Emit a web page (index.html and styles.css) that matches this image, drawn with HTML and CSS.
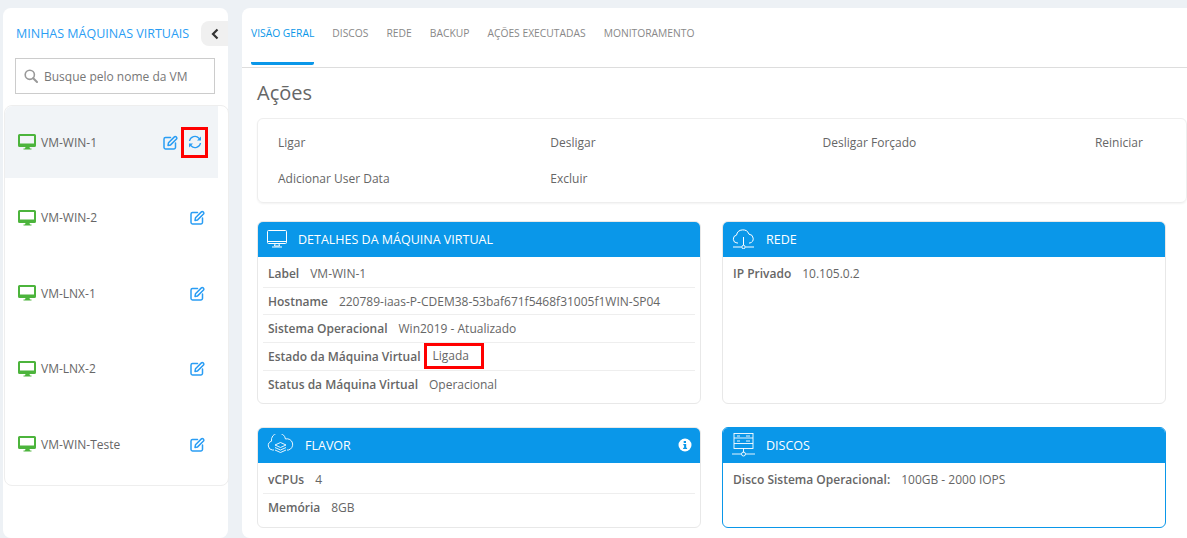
FILE: index.html
```html
<!DOCTYPE html>
<html lang="pt-BR">
<head>
  <meta charset="UTF-8" />
  <meta name="viewport" content="width=device-width, initial-scale=1.0" />
  <title>Minhas Máquinas Virtuais</title>
  <link rel="stylesheet" href="styles.css">
</head>
<body>

  <svg class="defs" width="0" height="0">
    <symbol id="vm" viewBox="0 0 18 16">
      <path d="M1.5 0h15A1.5 1.5 0 0 1 18 1.500v10a1.500 1.500 0 0 1-1.500 1.500h-5l.5 1.500h1.500v1h-8v-1H7l.5-1.500h-6A1.500 1.500 0 0 1 0 11.500v-10A1.500 1.500 0 0 1 1.500 0zM2 2v7.500h14V2z" fill="#4cb43c" fill-rule="evenodd"/>
    </symbol>
    <symbol id="edit" viewBox="0 0 15 15">
      <path d="M7.500 2.500H2.500A1.600 1.600 0 0 0 1 4v8.500A1.600 1.600 0 0 0 2.500 14H11a1.600 1.600 0 0 0 1.500-1.500V8" fill="none" stroke="#2a9df4" stroke-width="1.500" stroke-linecap="round"/>
      <path d="M5.500 7.800 11.400 1.900a1.200 1.200 0 0 1 1.700 0l.4.400a1.200 1.200 0 0 1 0 1.700L7.600 9.900 5 10.400z" fill="none" stroke="#2a9df4" stroke-width="1.500" stroke-linejoin="round"/>
    </symbol>
    <symbol id="sync" viewBox="0 0 14 14">
      <path d="M1.500 6A5.500 5.500 0 0 1 11 3.200L12.500 4.800M12.500 8A5.500 5.500 0 0 1 3 10.800L1.500 9.200" fill="none" stroke="#2a9df4" stroke-width="1.300"/>
      <path d="M13 1.500v4H9zM1 12.500v-4h4z" fill="#2a9df4"/>
    </symbol>
  </svg>

  <aside class="sidebar">
    <div class="sidebar-head">
      <span class="sidebar-title">MINHAS MÁQUINAS VIRTUAIS</span>
      <button class="collapse" type="button">
        <svg width="8" height="12" viewBox="0 0 8 12"><path d="M6.500 1.500 2 6l4.500 4.500" fill="none" stroke="#333" stroke-width="2.200"/></svg>
      </button>
    </div>
    <div class="search">
      <svg width="14" height="14" viewBox="0 0 14 14"><circle cx="5.800" cy="5.800" r="4.600" fill="none" stroke="#999" stroke-width="1.600"/><path d="M9.200 9.200 13 13" stroke="#999" stroke-width="2" stroke-linecap="round"/></svg>
      <span>Busque pelo nome da VM</span>
    </div>
    <ul class="vm-list">
      <li class="vm active">
        <svg class="vm-icon"><use href="#vm"/></svg>
        <span class="vm-name">VM-WIN-1</span>
        <svg class="edit-icon"><use href="#edit"/></svg>
        <span class="mark-icon"><svg class="sync-icon"><use href="#sync"/></svg></span>
      </li>
      <li class="vm">
        <svg class="vm-icon"><use href="#vm"/></svg>
        <span class="vm-name">VM-WIN-2</span>
        <svg class="edit-icon"><use href="#edit"/></svg>
      </li>
      <li class="vm">
        <svg class="vm-icon"><use href="#vm"/></svg>
        <span class="vm-name">VM-LNX-1</span>
        <svg class="edit-icon"><use href="#edit"/></svg>
      </li>
      <li class="vm">
        <svg class="vm-icon"><use href="#vm"/></svg>
        <span class="vm-name">VM-LNX-2</span>
        <svg class="edit-icon"><use href="#edit"/></svg>
      </li>
      <li class="vm">
        <svg class="vm-icon"><use href="#vm"/></svg>
        <span class="vm-name">VM-WIN-Teste</span>
        <svg class="edit-icon"><use href="#edit"/></svg>
      </li>
    </ul>
  </aside>

  <main class="main">
    <nav class="tabs">
      <a class="tab current">VISÃO GERAL</a>
      <a class="tab">DISCOS</a>
      <a class="tab">REDE</a>
      <a class="tab">BACKUP</a>
      <a class="tab">AÇÕES EXECUTADAS</a>
      <a class="tab">MONITORAMENTO</a>
    </nav>

    <div class="content">
      <h2 class="page-title">Ações</h2>

      <div class="actions">
        <span>Ligar</span>
        <span>Desligar</span>
        <span>Desligar Forçado</span>
        <span>Reiniciar</span>
        <span>Adicionar User Data</span>
        <span>Excluir</span>
      </div>

      <div class="cards">
        <section class="card card-details">
          <header class="card-head">
            <svg class="head-icon" width="20" height="18" viewBox="0 0 20 18" fill="none" stroke="#fff" stroke-width="1">
              <rect x=".5" y=".5" width="19" height="13" rx="1"/>
              <path d="M.5 11.500h19M8 14l-.5 2h5l-.5-2M5 17h10"/>
            </svg>
            <span>DETALHES DA MÁQUINA VIRTUAL</span>
          </header>
          <div class="row"><b>Label</b><span>VM-WIN-1</span></div>
          <div class="row"><b>Hostname</b><span>220789-iaas-P-CDEM38-53baf671f5468f31005f1WIN-SP04</span></div>
          <div class="row"><b>Sistema Operacional</b><span>Win2019 - Atualizado</span></div>
          <div class="row"><b>Estado da Máquina Virtual</b><span class="mark-text">Ligada</span></div>
          <div class="row"><b>Status da Máquina Virtual</b><span>Operacional</span></div>
        </section>

        <section class="card card-net">
          <header class="card-head">
            <svg class="head-icon" width="23" height="20" viewBox="0 0 23 20" fill="none" stroke="#fff" stroke-width="1">
              <path d="M6 14H5A4 4 0 0 1 4.500 6.100 6.500 6.500 0 0 1 17 5.200 4.500 4.500 0 0 1 18 14h-1"/>
              <path d="M11.500 8v8M1 18h8.500M13.500 18H22"/>
              <circle cx="11.500" cy="18" r="1.700"/>
            </svg>
            <span>REDE</span>
          </header>
          <div class="row"><b>IP Privado</b><span>10.105.0.2</span></div>
        </section>

        <section class="card card-flavor">
          <header class="card-head">
            <svg class="head-icon" width="27" height="22" viewBox="0 0 27 22" fill="none" stroke="#fff" stroke-width=".9">
              <path d="M7 16H5.500A4.500 4.500 0 0 1 4.500 7.200 7 7 0 0 1 18.500 5 5.500 5.500 0 0 1 21.500 16H20"/>
              <path d="M13.500 8.500 19 11l-5.500 2.500L8 11zM8 13.500 13.500 16l5.500-2.500M8 16l5.500 2.500L19 16"/>
            </svg>
            <span>FLAVOR</span>
            <svg class="info" width="14" height="14" viewBox="0 0 14 14">
              <circle cx="7" cy="7" r="6.500" fill="#fff"/>
              <path d="M5.700 3h2.300v2H5.700zM5.300 6h2.900v3.800h.9V11H5.100V9.800h1V7.200h-.8z" fill="#0a97e9"/>
            </svg>
          </header>
          <div class="row"><b>vCPUs</b><span>4</span></div>
          <div class="row"><b>Memória</b><span>8GB</span></div>
        </section>

        <section class="card card-disks">
          <header class="card-head">
            <svg class="head-icon" width="23" height="24" viewBox="0 0 23 24" fill="none" stroke="#fff" stroke-width=".9">
              <rect x="2" y=".5" width="19" height="15"/>
              <path d="M2 5h19M2 10.500h19M5 3h3M14 3h4M5 8h3M14 8h4M11.500 15.500v4M0 21h9.500M13.500 21H23"/>
              <circle cx="11.500" cy="21" r="2"/>
            </svg>
            <span>DISCOS</span>
          </header>
          <div class="row"><b>Disco Sistema Operacional:</b><span>100GB - 2000 IOPS</span></div>
        </section>
      </div>
    </div>
  </main>

</body>
</html>
```

FILE: styles.css
```css
html, body {
  height: 538px;
  overflow: hidden;
}

body {
  font-family: 'Open Sans', sans-serif;
  font-size: 12px;
  color: #666;
  background-color: #edf1f5;
  margin: 0;
  padding: 8px 0 0 3px;
  box-sizing: border-box;
  display: flex;
  gap: 14px;
}

.defs {
  position: absolute;
}

/* sidebar */
.sidebar {
  width: 225px;
  height: 530px;
  flex-shrink: 0;
  background-color: #fff;
  border-radius: 8px;
}

.sidebar-head {
  display: flex;
  align-items: center;
  justify-content: space-between;
  padding: 13px 0 0 13px;
  height: 25px;
}

.sidebar-title {
  font-size: 12.500px;
  color: #2a9df4;
}

.collapse {
  width: 27px;
  height: 25px;
  border: 0;
  padding: 0;
  background-color: #f0f0f0;
  border-radius: 8px 0 0 8px;
  display: flex;
  align-items: center;
  justify-content: center;
}

.search {
  margin: 12px 13px 0 12px;
  height: 34px;
  border: 1px solid #ccc;
  display: flex;
  align-items: center;
  gap: 6px;
  padding-left: 8px;
  color: #777;
}

.vm-list {
  list-style: none;
  margin: 11px 0 0 1px;
  padding: 0 10px 5px 0;
  width: 213px;
  height: 374px;
  border: 1px solid #eee;
  border-top-color: #eee;
  border-radius: 8px;
  box-sizing: content-box;
  display: flex;
  flex-direction: column;
  gap: 3.500px;
  height: 374px;
}

.vm {
  height: 72px;
  flex-shrink: 0;
  display: flex;
  align-items: center;
  padding: 0 13px 0 13px;
}

.vm.active {
  background-color: #f1f4f7;
  border-radius: 8px 0 0 0;
}

.vm-icon {
  width: 18px;
  height: 16px;
  margin-right: 5px;
}

.vm-name {
  flex: 1;
}

.edit-icon {
  width: 15px;
  height: 15px;
}

.mark-icon {
  width: 21px;
  height: 25px;
  margin: 0 -3px 0 3px;
  border: 3px solid #f00;
  display: flex;
  align-items: center;
  justify-content: center;
}

.sync-icon {
  width: 14px;
  height: 14px;
}

/* main */
.main {
  width: 960px;
  height: 530px;
  flex-shrink: 0;
  background-color: #fff;
  border-radius: 8px;
}

.tabs {
  display: flex;
  gap: 18px;
  height: 59px;
  padding-left: 9px;
  border-bottom: 1px solid #ddd;
}

.tab {
  font-size: 10.300px;
  color: #888;
  line-height: 50px;
  height: 54px;
}

.tab.current {
  color: #0a97e9;
  border-bottom: 3px solid #0a97e9;
  border-radius: 2px;
}

.content {
  padding: 0 15px;
}

.page-title {
  font-size: 20px;
  font-weight: 400;
  line-height: 27px;
  margin: 11px 0 12px;
}

.actions {
  height: 85px;
  box-sizing: border-box;
  border: 1px solid #eee;
  border-radius: 6px;
  box-shadow: 0 1px 2px rgba(0,0,0,0.05);
  margin-bottom: 18px;
  padding: 5px 0 0 20px;
  display: grid;
  grid-template-columns: repeat(4, 272.300px);
  grid-auto-rows: 36px;
  align-items: center;
}

.cards {
  display: grid;
  grid-template-columns: 444px 444px;
  grid-template-rows: 183px 101px;
  gap: 23px 21px;
}

.card {
  border: 1px solid #e8e8e8;
  border-radius: 6px;
  overflow: hidden;
  padding: 0 5px;
}

.card-head {
  background-color: #0a97e9;
  color: #fff;
  font-size: 12.500px;
  height: 36px;
  margin: -1px -6px 3px;
  padding: 0 10px;
  display: flex;
  align-items: center;
  gap: 11px;
}

.card-disks {
  border-color: #0a97e9;
}

.head-icon {
  flex-shrink: 0;
}

.info {
  margin-left: auto;
  margin-right: -1px;
}

.row {
  display: flex;
  align-items: center;
  gap: 11px;
  height: 27.700px;
  padding-left: 5px;
  border-bottom: 1px solid #eee;
  box-sizing: border-box;
}

.row:last-child {
  border-bottom: 0;
}

.row b {
  font-weight: 600;
}

.mark-text {
  margin-left: -8px;
  padding: 0 12px 0 6px;
  height: 26px;
  line-height: 20px;
  box-sizing: border-box;
  border: 3px solid #f00;
}
```
